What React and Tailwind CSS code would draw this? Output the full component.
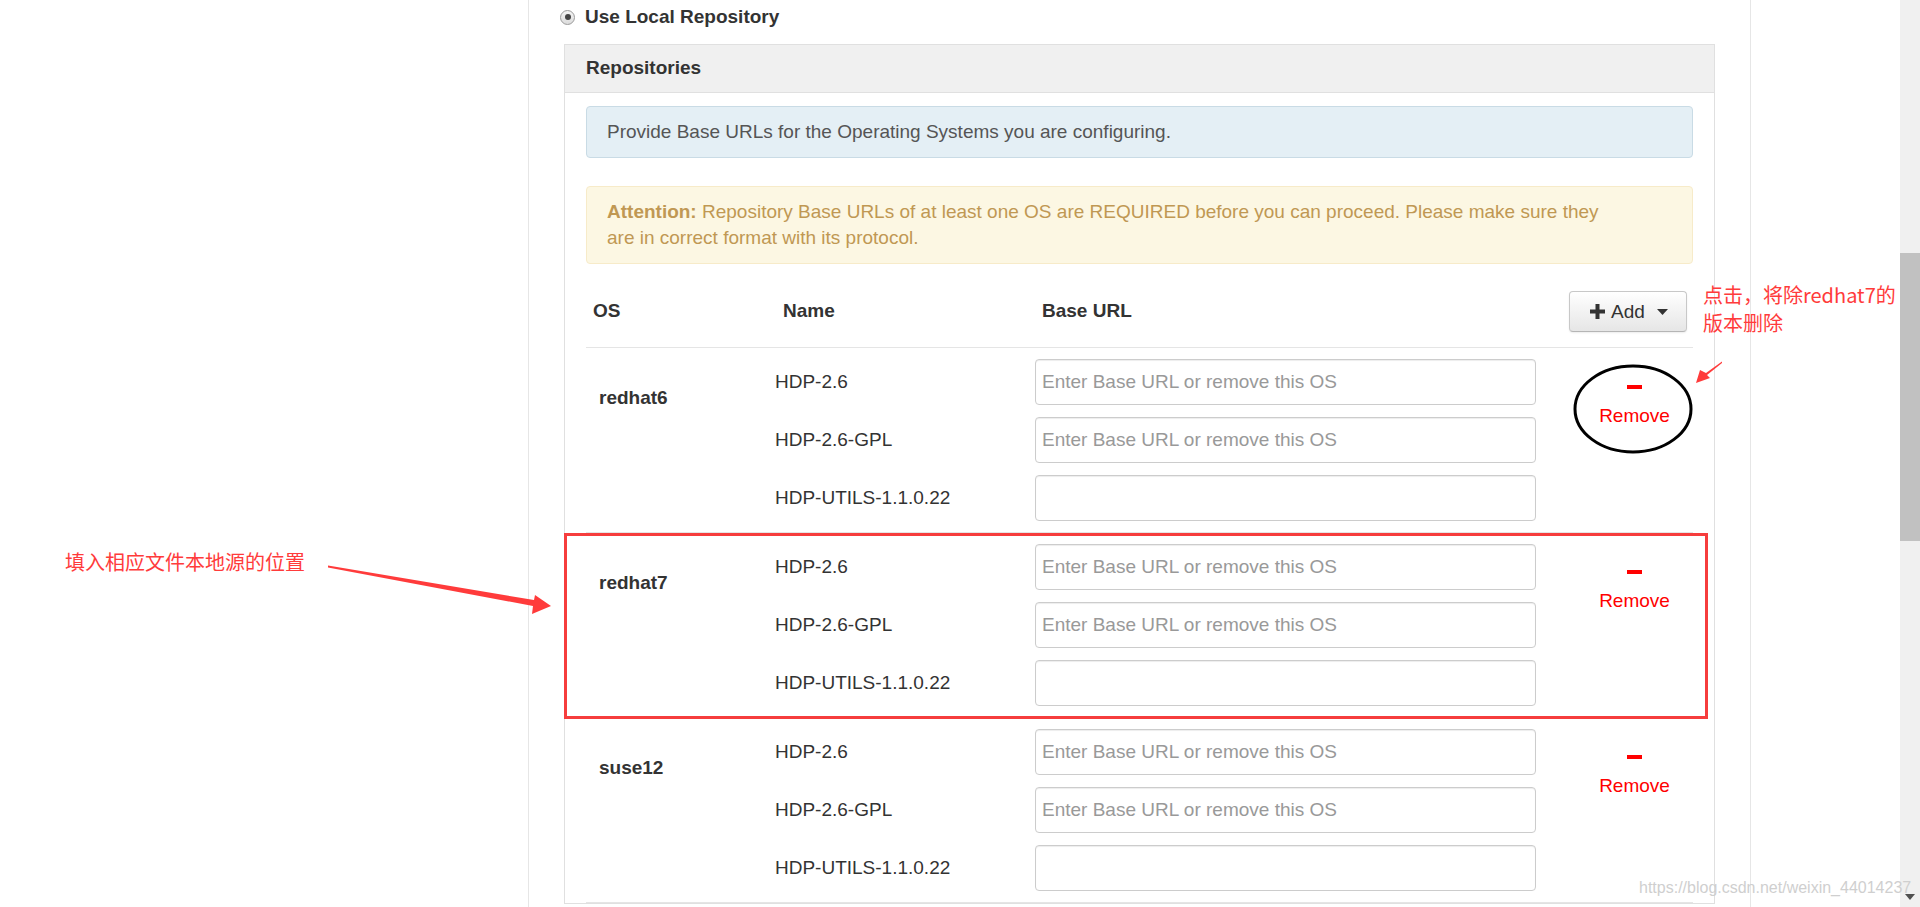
import React from "react";

const repos = [
  { name: "HDP-2.6", ph: true },
  { name: "HDP-2.6-GPL", ph: true },
  { name: "HDP-UTILS-1.1.0.22", ph: false },
];

const groups = [
  { os: "redhat6", boxed: false },
  { os: "redhat7", boxed: true },
  { os: "suse12", boxed: false },
];

function Group({ os, boxed }) {
  return (
    <div className="relative flex border-b border-[#e5e5e5] pt-[11px] pb-[11px]">
      <div className="w-[189px] pl-[13px] pt-[26px] font-bold leading-[26px] text-[#333]">{os}</div>
      <div className="flex flex-col gap-[12px]">
        {repos.map((r) => (
          <div key={r.name} className="flex items-center h-[46px]">
            <div className="w-[260px] leading-[26px] text-[#333]">{r.name}</div>
            <input
              readOnly
              placeholder={r.ph ? "Enter Base URL or remove this OS" : ""}
              className="w-[501px] h-[46px] border border-[#cccccc] rounded-[4px] px-[6px] bg-white text-[19px] text-[#555] placeholder:text-[#999] shadow-[inset_0_1px_1px_rgba(0,0,0,0.075)] outline-none"
            />
          </div>
        ))}
      </div>
      <div className="flex-1 flex flex-col items-center pl-[40px] pt-[26px]">
        <div className="w-[15px] h-[4px] bg-[#ff0000]" />
        <div className="mt-[14px] leading-[26px] text-[#ff0000]">Remove</div>
      </div>
      {boxed && (
        <div className="absolute left-[-22px] right-[-15px] top-0 bottom-[-2px] border-[3px] border-[#f63d3d] pointer-events-none" />
      )}
    </div>
  );
}

export default function App() {
  return (
    <div className="relative w-[1920px] h-[907px] overflow-hidden bg-white flex font-['Liberation_Sans',Arial,sans-serif] text-[19px] text-[#333]">
      <div className="w-[528px] shrink-0" />
      <div className="w-[1223px] shrink-0 h-full border-x border-[#e6e6e6] px-[35px] pt-[4px]">
        <div className="flex items-center h-[26px] ml-[-4px] gap-[10px]">
          <div className="w-[15px] h-[15px] rounded-full border border-[#9a9a9a] bg-gradient-to-b from-[#f4f4f4] to-[#dcdcdc] flex items-center justify-center">
            <div className="w-[6px] h-[6px] rounded-full bg-[#444]" />
          </div>
          <span className="font-bold leading-[26px] text-[#333]">Use Local Repository</span>
        </div>
        <div className="mt-[14px] border border-[#e0e0e0]">
          <div className="h-[48px] flex items-center px-[21px] bg-[#f0f0f0] border-b border-[#e0e0e0] font-bold text-[#333]">
            Repositories
          </div>
          <div className="px-[21px] pt-[13px]">
            <div className="border border-[#c9dbe5] bg-[#e4eff5] rounded-[4px] px-[20px] py-[12px] leading-[26px] text-[#555]">
              Provide Base URLs for the Operating Systems you are configuring.
            </div>
            <div className="mt-[28px] border border-[#f7ebc9] bg-[#fcf7e3] rounded-[4px] px-[20px] py-[12px] leading-[26px] text-[#c09853]">
              <span className="font-bold">Attention:</span> Repository Base URLs of at least one OS are REQUIRED before you can proceed. Please make sure they
              <br />
              are in correct format with its protocol.
            </div>
            <div className="mt-[12px] flex items-center h-[72px] border-b border-[#e5e5e5] font-bold text-[#333]">
              <div className="w-[197px] pl-[7px]">OS</div>
              <div className="w-[259px]">Name</div>
              <div className="flex-1">Base URL</div>
              <div className="mr-[6px] w-[118px] h-[41px] rounded-[4px] border border-[#c8c8c8] border-b-[#b5b5b5] bg-gradient-to-b from-[#ffffff] to-[#e6e6e6] shadow-[0_1px_2px_rgba(0,0,0,0.08)] flex items-center pl-[20px] font-normal">
                <svg width="15" height="15" viewBox="0 0 15 15" className="shrink-0">
                  <rect x="5.5" y="0" width="4" height="15" fill="#333" />
                  <rect x="0" y="5.5" width="15" height="4" fill="#333" />
                </svg>
                <span className="ml-[6px] leading-[26px] text-[#333]">Add</span>
                <svg width="11" height="6" viewBox="0 0 11 6" className="ml-[12px] shrink-0">
                  <polygon points="0,0 11,0 5.5,6" fill="#333" />
                </svg>
              </div>
            </div>
            {groups.map((g) => (
              <Group key={g.os} os={g.os} boxed={g.boxed} />
            ))}
          </div>
        </div>
      </div>
      <div className="flex-1" />
      <div className="relative w-[20px] shrink-0 h-full bg-[#f0f0f0]">
        <div className="absolute left-0 right-0 top-[253px] h-[288px] bg-[#c1c1c1]" />
        <svg width="10" height="6" viewBox="0 0 10 6" className="absolute left-[5px] bottom-[7px]">
          <polygon points="0,0 10,0 5,6" fill="#505050" />
        </svg>
      </div>

      {/* annotations */}
      <div className="absolute left-[65px] top-[548px] text-[20px] leading-[28px] text-[#ff3b3b] font-['Noto_Sans_CJK_SC',sans-serif] whitespace-nowrap">
        填入相应文件本地源的位置
      </div>
      <div className="absolute left-[1703px] top-[281px] text-[20px] leading-[28px] text-[#ff3b3b] font-['Noto_Sans_CJK_SC',sans-serif] whitespace-nowrap">
        <div>点击，将除redhat7的</div>
        <div>版本删除</div>
      </div>
      <div className="absolute left-[1639px] top-[878px] text-[16px] leading-[20px] text-[#cfcfcf] whitespace-nowrap">
        https://blog.csdn.net/weixin_44014237
      </div>
      <svg className="absolute left-0 top-0 pointer-events-none" width="1920" height="907" viewBox="0 0 1920 907">
        <ellipse cx="1633" cy="409" rx="58" ry="43" fill="none" stroke="#000" strokeWidth="3" />
        <polygon
          points="328,565.5 534,600 535,595 551,606 532,614 533,606 328,567.5"
          fill="#ff3b3b"
        />
        <polygon
          points="1722,361.5 1706,373 1700,370 1696,383 1710,378 1707,375 1722,363"
          fill="#ff3b3b"
        />
      </svg>
    </div>
  );
}
